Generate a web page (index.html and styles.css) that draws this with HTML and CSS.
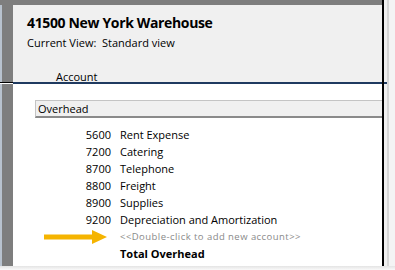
FILE: index.html
```html
<!DOCTYPE html>
<html>
<head>
<meta charset="utf-8">
<link rel="stylesheet" href="styles.css">
</head>
<body>
<div class="frame">
  <div class="top-row">
    <div class="side side-top"></div>
    <div class="panel">
      <div class="panel-inner">
        <div class="title">41500 New York Warehouse</div>
        <div class="view">Current View:&nbsp; Standard view</div>
        <div class="colhead">Account</div>
      </div>
    </div>
    <div class="vline"></div>
    <div class="rightbar rightbar-top"></div>
  </div>
  <div class="body-row">
    <div class="side"></div>
    <div class="content">
      <div class="group">Overhead</div>
      <div class="rows">
        <div class="row"><span class="num">5600</span><span class="name">Rent Expense</span></div>
        <div class="row"><span class="num">7200</span><span class="name">Catering</span></div>
        <div class="row"><span class="num">8700</span><span class="name">Telephone</span></div>
        <div class="row"><span class="num">8800</span><span class="name">Freight</span></div>
        <div class="row"><span class="num">8900</span><span class="name">Supplies</span></div>
        <div class="row"><span class="num">9200</span><span class="name">Depreciation and Amortization</span></div>
        <div class="row"><span class="num"><svg class="arrow" width="64" height="16" viewBox="0 0 64 16"><rect x="0" y="5.5" width="50" height="5" fill="#f5b400"/><polygon points="48,1 63,8 48,15" fill="#f5b400"/></svg></span><span class="name add">&lt;&lt;Double-click to add new account&gt;&gt;</span></div>
        <div class="row"><span class="num"></span><span class="name total">Total Overhead</span></div>
      </div>
    </div>
    <div class="vline"></div>
    <div class="rightbar"></div>
  </div>
  <div class="shadow"></div>
</div>
</body>
</html>
```

FILE: styles.css
```css
* { box-sizing: border-box; }
html, body { margin: 0; padding: 0; background: #ffffff; }
body {
  font-family: "Open Sans", "Noto Sans", sans-serif;
  color: #000;
  width: 395px;
  height: 270px;
  overflow: hidden;
}
.frame {
  display: flex;
  flex-direction: column;
  width: 395px;
  height: 270px;
}
.top-row {
  display: flex;
  height: 84px;
}
.body-row {
  display: flex;
  height: 182px;
}
.side {
  width: 13px;
  flex: none;
  background: linear-gradient(to right, #b8c2ce 0, #b8c2ce 2px, #7e7e7e 2px, #7e7e7e 13px);
}
.side-top {
  border-bottom: 1px solid #000;
  height: 83px;
  background: linear-gradient(to bottom, #7e7e7e 0, #7e7e7e 5px, transparent 5px),
              linear-gradient(to right, #b8c2ce 0, #b8c2ce 2px, #7e7e7e 2px, #7e7e7e 13px);
}
.panel {
  width: 369px;
  flex: none;
  display: flex;
  flex-direction: column;
  border-top: 5px solid #7e7e7e;
  border-bottom: 2px solid #1f3a60;
  background: #f0f0f0;
}
.panel-inner {
  padding: 9px 0 0 14px;
}
.title {
  font-size: 14px;
  font-weight: 700;
  line-height: 18px;
  letter-spacing: -0.35px;
}
.view {
  font-size: 11px;
  line-height: 14px;
  margin-top: 4px;
}
.colhead {
  font-size: 11px;
  line-height: 14px;
  margin-top: 20px;
  padding-left: 29px;
}
.vline {
  width: 2px;
  flex: none;
  background: #000;
}
.rightbar {
  flex: 1;
  background: linear-gradient(to right, #f0f0f0 0, #f0f0f0 3px, #d6d6d6 3px, #d6d6d6 5px, #f4f4f4 5px);
}
.rightbar-top {
  background:
    linear-gradient(to right, #1f3a60 0, #1f3a60 3px, transparent 3px) left bottom / 100% 2px no-repeat,
    linear-gradient(to right, #f0f0f0 0, #f0f0f0 3px, #d6d6d6 3px, #d6d6d6 5px, #f4f4f4 5px);
}
.content {
  width: 369px;
  flex: none;
  padding: 16px 0 0 22px;
  background: #fff;
}
.group {
  height: 18px;
  background: #f0f0f0;
  border-top: 1px solid #c4c4c4;
  border-left: 1px solid #c4c4c4;
  border-bottom: 2px solid #8a8a8a;
  font-size: 11px;
  line-height: 15px;
  padding-left: 2px;
}
.rows {
  margin-top: 8px;
  display: flex;
  flex-direction: column;
}
.row {
  display: flex;
  height: 17px;
  line-height: 17px;
  font-size: 11px;
}
.num {
  width: 76px;
  text-align: right;
  flex: none;
  display: flex;
  justify-content: flex-end;
  align-items: center;
}
.name {
  margin-left: 9px;
  white-space: nowrap;
}
.arrow {
  display: block;
  margin-right: 3px;
}
.add {
  font-size: 9.5px;
  color: #8a8a8a;
  letter-spacing: 0.45px;
}
.total {
  font-weight: 700;
}
.shadow {
  flex: 1;
  background: linear-gradient(to bottom, #e4e4e4, #fafafa);
}
```
